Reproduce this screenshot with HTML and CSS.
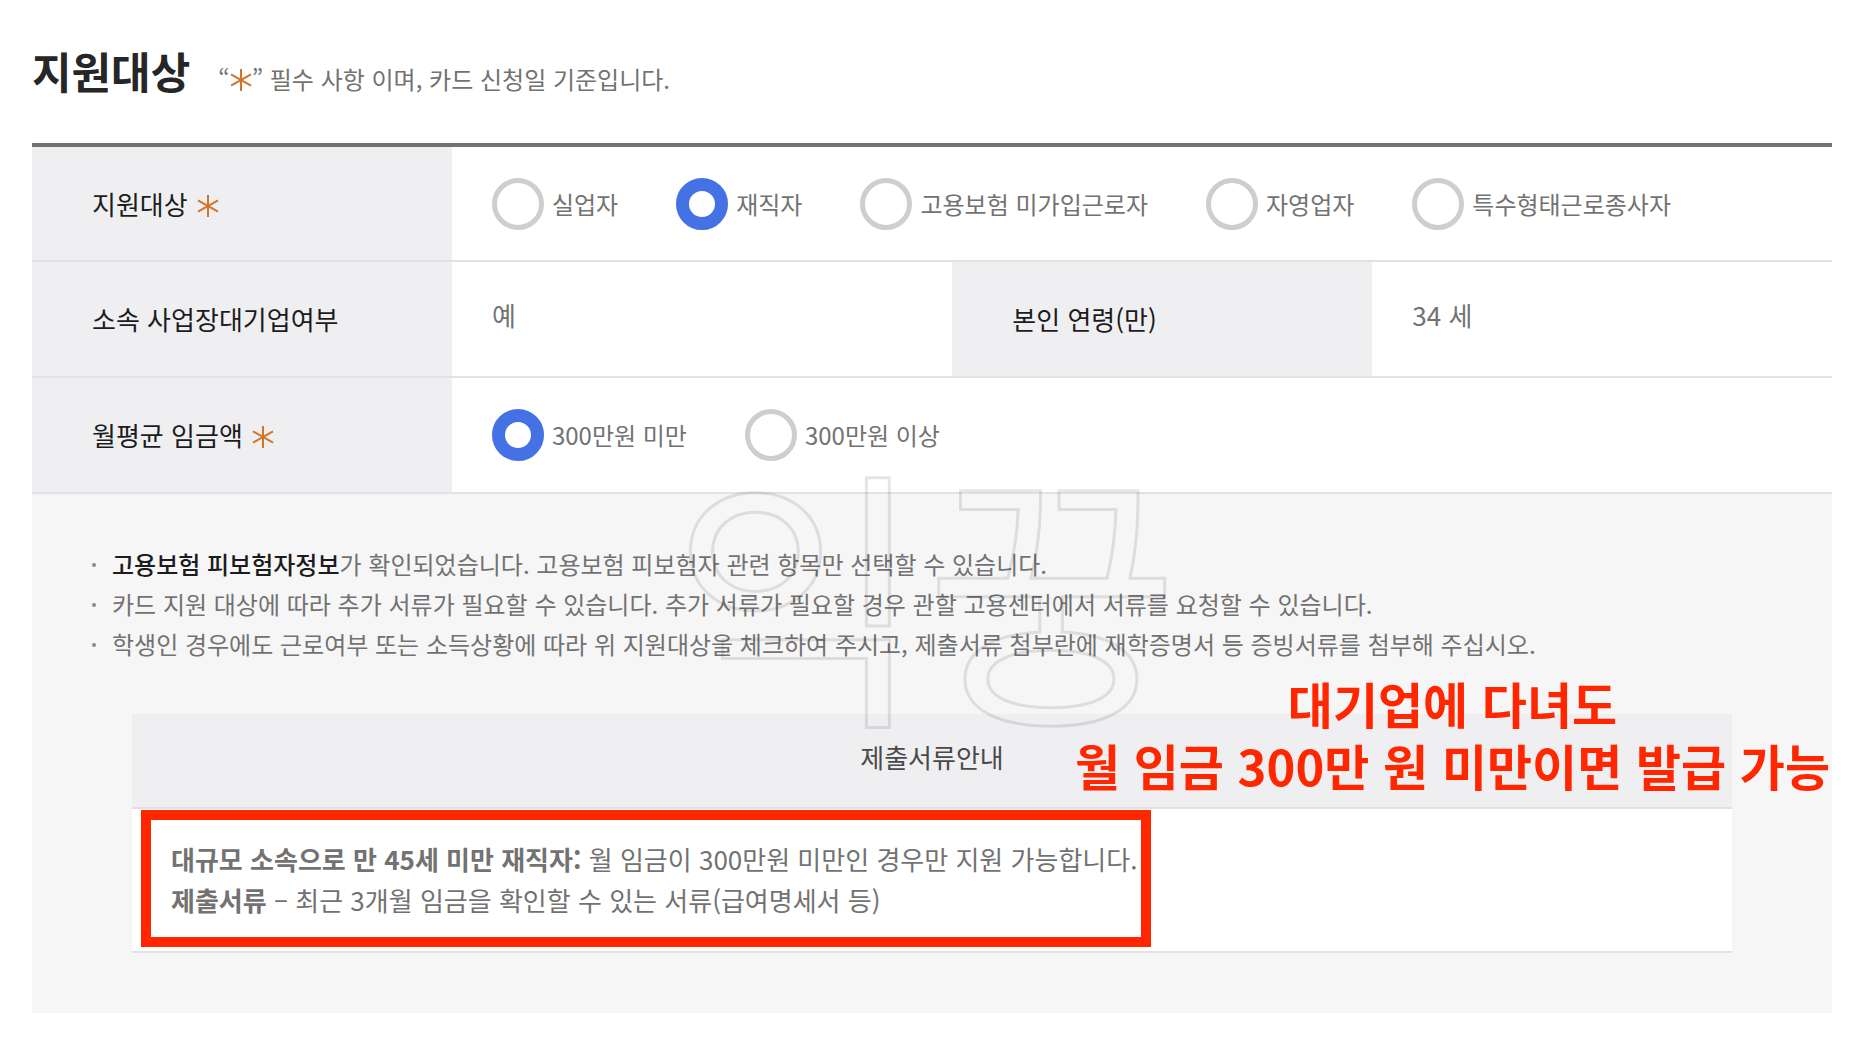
FILE: index.html
```html
<!DOCTYPE html>
<html lang="ko">
<head>
<meta charset="utf-8">
<meta name="viewport" content="width=device-width, initial-scale=1">
<title>지원대상</title>
<link rel="stylesheet" href="styles.css">
</head>
<body>
<svg class="defs" width="0" height="0" aria-hidden="true">
  <symbol id="star" viewBox="0 0 22 22">
    <path d="M11 0V22M1 5.4L21 16.6M21 5.4L1 16.6" fill="none" stroke="currentColor" stroke-width="2"/>
  </symbol>
</svg>
<main class="page">
  <header class="heading">
    <h1 class="title">지원대상</h1>
    <p class="hint">“<svg class="star" role="img" aria-label="필수"><use href="#star"/></svg>” 필수 사항 이며, 카드 신청일 기준입니다.</p>
  </header>

  <form>
    <table class="form-table">
      <colgroup><col class="col-label"><col class="col-value"><col class="col-label"><col></colgroup>
      <tr>
        <th scope="row">지원대상 <svg class="star" role="img" aria-label="필수"><use href="#star"/></svg></th>
        <td colspan="3">
          <div class="options">
            <label class="option"><input type="radio" name="target">실업자</label>
            <label class="option"><input type="radio" name="target" checked>재직자</label>
            <label class="option"><input type="radio" name="target">고용보험 미가입근로자</label>
            <label class="option"><input type="radio" name="target">자영업자</label>
            <label class="option"><input type="radio" name="target">특수형태근로종사자</label>
          </div>
        </td>
      </tr>
      <tr>
        <th scope="row">소속 사업장대기업여부</th>
        <td class="plain">예</td>
        <th scope="row">본인 연령(만)</th>
        <td class="plain">34 세</td>
      </tr>
      <tr>
        <th scope="row">월평균 임금액 <svg class="star" role="img" aria-label="필수"><use href="#star"/></svg></th>
        <td colspan="3">
          <div class="options">
            <label class="option"><input type="radio" name="wage" checked>300만원 미만</label>
            <label class="option"><input type="radio" name="wage">300만원 이상</label>
          </div>
        </td>
      </tr>
    </table>
  </form>

  <section class="panel">
    <div class="watermark">익꿍</div>
    <ul class="notes">
      <li><strong>고용보험 피보험자정보</strong>가 확인되었습니다. 고용보험 피보험자 관련 항목만 선택할 수 있습니다.</li>
      <li>카드 지원 대상에 따라 추가 서류가 필요할 수 있습니다. 추가 서류가 필요할 경우 관할 고용센터에서 서류를 요청할 수 있습니다.</li>
      <li>학생인 경우에도 근로여부 또는 소득상황에 따라 위 지원대상을 체크하여 주시고, 제출서류 첨부란에 재학증명서 등 증빙서류를 첨부해 주십시오.</li>
    </ul>
    <div class="docs">
      <table class="docs-table">
        <thead><tr><th scope="col">제출서류안내</th></tr></thead>
        <tbody><tr><td>
          <div class="boxed">
            <p><b>대규모 소속으로 만 45세 미만 재직자:</b> 월 임금이 300만원 미만인 경우만 지원 가능합니다.</p>
            <p><b>제출서류</b> – 최근 3개월 임금을 확인할 수 있는 서류(급여명세서 등)</p>
          </div>
        </td></tr></tbody>
      </table>
      <p class="callout">대기업에 다녀도<br>월 임금 300만 원 미만이면 발급 가능</p>
    </div>
  </section>
</main>
</body>
</html>
```
FILE: styles.css
```css
* {
  box-sizing: border-box;
}

body {
  margin: 0;
  background: #fff;
  color: #727272;
  font-family: "Noto Sans CJK KR", sans-serif;
  font-size: 24px;
  line-height: 40px;
}

h1,
p,
ul {
  margin: 0;
  padding: 0;
}

.defs {
  display: block;
}

.page {
  padding: 38px 26px 27px 32px;
}

.heading {
  display: flex;
  align-items: baseline;
  gap: 28px;
  padding-bottom: 41px;
}

.title {
  color: #262626;
  font-size: 43px;
  font-weight: 700;
  line-height: 64px;
}

.star {
  width: 22px;
  height: 22px;
  color: #d0752a;
  vertical-align: -2px;
}

.form-table th .star {
  margin-left: 2px;
}

.form-table,
.docs-table {
  width: 100%;
  border-collapse: separate;
  border-spacing: 0;
}

.form-table {
  table-layout: fixed;
  border-top: 4px solid #727272;
}

.col-label {
  width: 23.33%;
}

.col-value {
  width: 27.8%;
}

.form-table th,
.form-table td {
  height: 116px;
  border-bottom: 2px solid #e2e2e4;
  text-align: left;
}

.form-table tr:first-child > * {
  height: 115px;
}

.form-table th {
  padding: 0 0 0 60px;
  background: #efeff1;
  color: #1c1c1e;
  font-size: 26px;
  font-weight: 400;
}

.form-table td {
  padding: 0 0 0 40px;
}

.form-table .plain {
  padding-bottom: 8px;
  font-size: 26px;
}

.options {
  display: flex;
  gap: 58px;
}

.option {
  display: flex;
  align-items: center;
  gap: 8px;
  white-space: nowrap;
}

.option input {
  appearance: none;
  width: 52px;
  height: 52px;
  margin: 0;
  border: 5px solid #cecece;
  border-radius: 50%;
  background: #fff;
}

.option input:checked {
  border: 13px solid #4471e3;
}

.panel {
  position: relative;
  padding: 50px 100px 60px;
  background: #f6f6f6;
}

.notes {
  margin: 0 -60px 50px -40px;
  list-style: none;
}

.notes li {
  display: flex;
  white-space: pre-wrap;
}

.notes li::before {
  content: "";
  flex: none;
  width: 4px;
  height: 4px;
  margin: 19px 16px 0 0;
  border-radius: 50%;
  background: #8a8a8a;
}

.notes strong {
  color: #1c1c1e;
  font-weight: 500;
}

.docs {
  position: relative;
}

.docs-table th {
  height: 95px;
  padding: 0 0 8px;
  border-bottom: 2px solid #e2e2e4;
  background: #efeff1;
  color: #4a4a4a;
  font-size: 26px;
  font-weight: 400;
}

.docs-table td {
  padding: 1px 0 4px 9px;
  border-bottom: 2px solid #e2e2e4;
  background: #fff;
}

.boxed {
  width: fit-content;
  padding: 18px 4px 17px 20px;
  border: 10px solid #ff2600;
  font-size: 26px;
  line-height: 41px;
}

.callout {
  position: absolute;
  top: -42px;
  right: -98px;
  color: #ff2600;
  font-size: 49px;
  font-weight: 700;
  line-height: 62px;
  text-align: center;
  white-space: nowrap;
}

.watermark {
  position: absolute;
  z-index: 1;
  top: -58px;
  left: 50%;
  margin-left: -261px;
  color: transparent;
  font-size: 276px;
  line-height: 300px;
  pointer-events: none;
  -webkit-text-stroke: 3px rgba(0, 0, 0, 0.1);
}
```
